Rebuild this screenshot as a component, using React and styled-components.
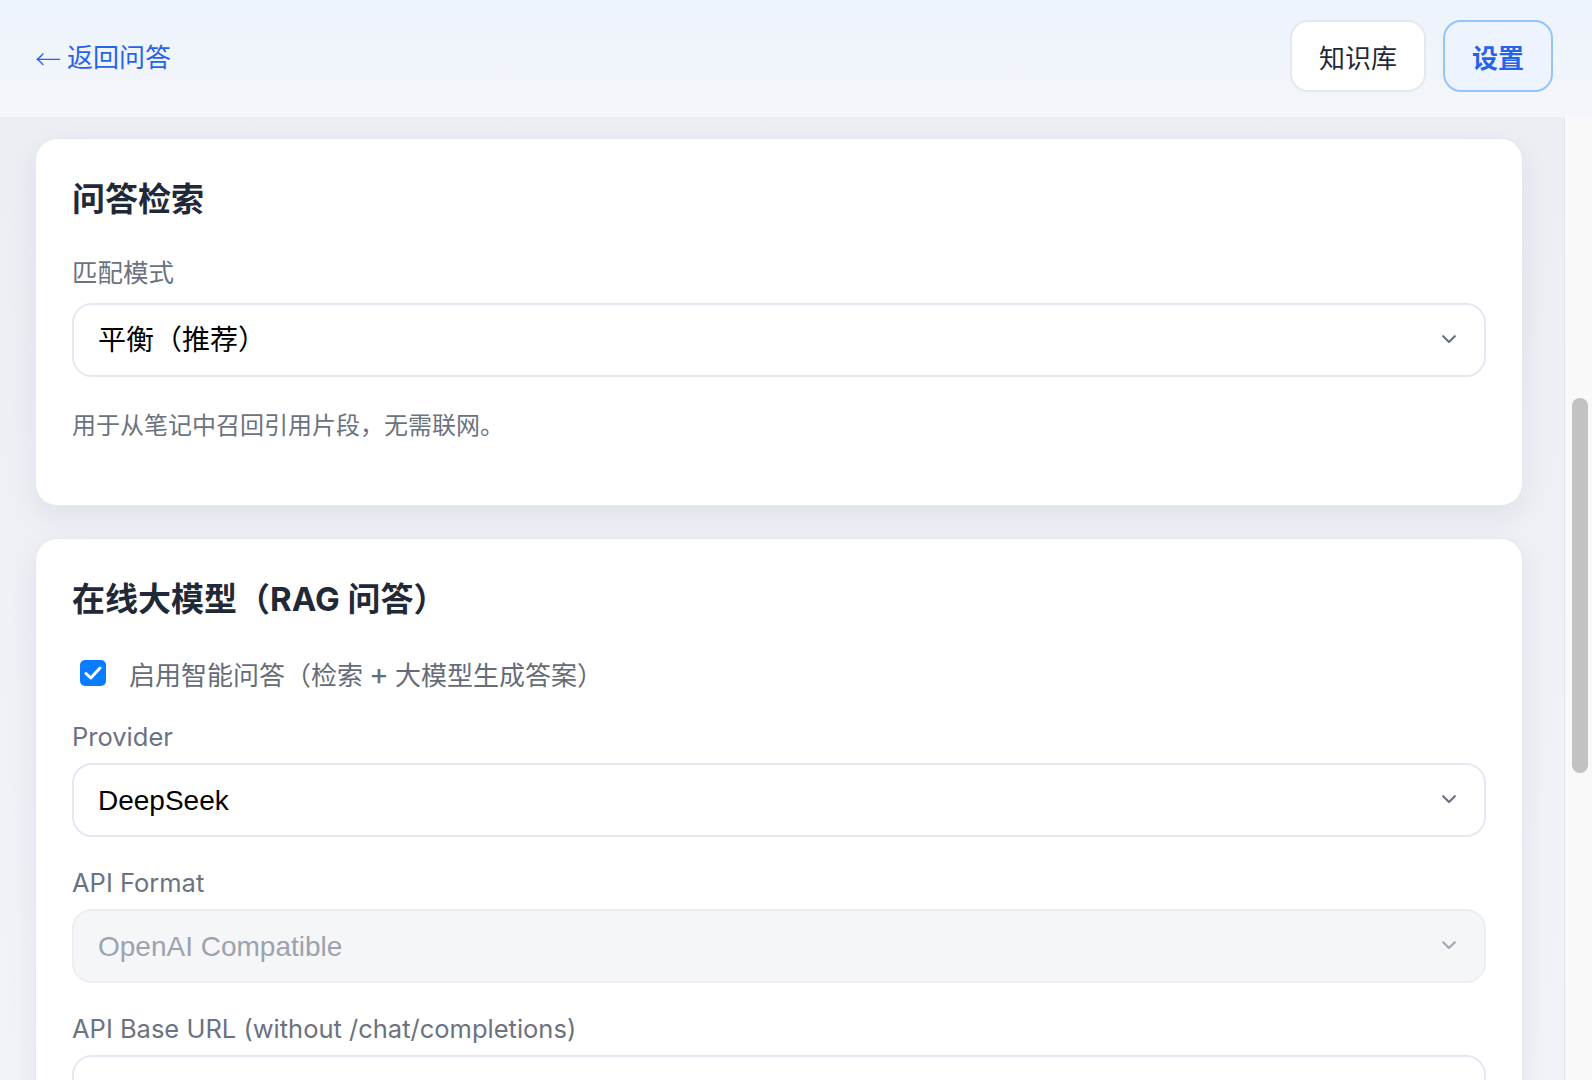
import React from 'react';
import styled, { createGlobalStyle } from 'styled-components';

const GlobalStyle = createGlobalStyle`
  html, body { margin: 0; padding: 0; height: 100%; overflow: hidden; }
  body {
    font-family: Inter, "Noto Sans CJK SC", sans-serif;
    background: #f0f2f7;
    -webkit-font-smoothing: antialiased;
  }
  #root { height: 100%; }
  *, *::before, *::after { box-sizing: border-box; }
`;

const Shell = styled.div`
  height: 100vh;
  display: flex;
  flex-direction: column;
  background: #f0f2f7;
`;

const TopBar = styled.header`
  flex: 0 0 117px;
  display: flex;
  align-items: center;
  justify-content: space-between;
  padding: 0 39px 5px 35px;
  background: linear-gradient(180deg, #edf3fd 0%, #f4f6fa 100%);
`;

const BackLink = styled.a`
  display: flex;
  align-items: center;
  gap: 6px;
  margin-top: 4px;
  font-size: 26px;
  line-height: 36px;
  color: #2563eb;
  text-decoration: none;
  cursor: pointer;
`;

const BackArrow = styled.span`
  font-family: "Noto Sans CJK SC", sans-serif;
  font-weight: 300;
`;

const NavGroup = styled.nav`
  display: flex;
  gap: 17px;
`;

const NavButton = styled.button`
  height: 72px;
  padding: 0 27px;
  border-radius: 18px;
  font-family: Inter, "Noto Sans CJK SC", sans-serif;
  font-size: 26px;
  font-weight: ${(p) => (p.$active ? 700 : 400)};
  color: ${(p) => (p.$active ? '#2563eb' : '#1f2937')};
  background: ${(p) => (p.$active ? '#eef4ff' : '#ffffff')};
  border: 2px solid ${(p) => (p.$active ? '#93c5fd' : '#e4e8f0')};
  cursor: pointer;
`;

const Body = styled.div`
  flex: 1;
  min-height: 0;
  display: flex;
`;

const Main = styled.main`
  flex: 1;
  min-width: 0;
  overflow: hidden;
  background: linear-gradient(180deg, #eceef4 0%, #f1f3f8 100%);
`;

const ScrollTrack = styled.div`
  flex: 0 0 28px;
  display: flex;
  flex-direction: column;
  background: #f9f9f9;
  border-left: 1px solid #e3e3e3;
  padding-left: 7px;
`;

const ScrollThumb = styled.div`
  width: 16px;
  border-radius: 8px;
  background: #c2c2c2;
`;

const Content = styled.div`
  display: flex;
  flex-direction: column;
  gap: 32px;
  padding: 21px 41px 40px 35px;
`;

const Card = styled.section`
  background: #ffffff;
  border: 1px solid #e5e8ef;
  border-radius: 22px;
  padding: 36px;
  box-shadow: 0 10px 30px rgba(31, 45, 90, 0.07);
`;

const CardTitle = styled.h2`
  margin: 0 0 32px;
  font-size: 33px;
  line-height: 48px;
  font-weight: 700;
  color: #1f2937;
`;

const Stack = styled.div`
  display: flex;
  flex-direction: column;
  gap: 28px;
`;

const Field = styled.div`
  display: flex;
  flex-direction: column;
  gap: ${(p) => p.$gap ?? 8}px;
`;

const Label = styled.label`
  font-size: 25.5px;
  line-height: 36px;
  color: #6b7280;
`;

const SelectWrap = styled.div`
  position: relative;
`;

const Select = styled.select`
  appearance: none;
  -webkit-appearance: none;
  width: 100%;
  height: 74px;
  padding: 0 64px 0 24px;
  border: 2px solid ${(p) => (p.disabled ? '#eceef3' : '#e3e8f1')};
  border-radius: 20px;
  background: ${(p) => (p.disabled ? '#f5f6f8' : '#ffffff')};
  color: ${(p) => (p.disabled ? '#9ca3af' : '#000000')};
  font-family: "Liberation Sans", "Noto Sans CJK SC", sans-serif;
  font-size: 28px;
  opacity: 1;
  outline: none;
`;

const TextInput = styled.input`
  width: 100%;
  height: 74px;
  padding: 0 24px;
  border: 2px solid #e3e8f1;
  border-radius: 20px;
  background: #ffffff;
  color: #000000;
  font-family: "Liberation Sans", "Noto Sans CJK SC", sans-serif;
  font-size: 28px;
  outline: none;
`;

const Chevron = styled.svg`
  position: absolute;
  right: 30px;
  top: 50%;
  margin-top: -5px;
  width: 14px;
  height: 9px;
  pointer-events: none;
  color: ${(p) => (p.$muted ? '#a3a9b4' : '#6b7280')};
`;

const Help = styled.p`
  margin: 31px 0 25px;
  font-size: 24px;
  line-height: 36px;
  color: #6b7280;
`;

const CheckRow = styled.label`
  display: flex;
  align-items: center;
  gap: 23px;
  height: 36px;
  padding-left: 8px;
  font-size: 26px;
  color: #656c78;
  cursor: pointer;
`;

const Plus = styled.span`
  font-size: 30px;
  line-height: 1;
  padding: 0 6px;
`;

const CheckBox = styled.span`
  flex: 0 0 26px;
  width: 26px;
  height: 26px;
  border-radius: 5px;
  background: #0a7cff;
  display: flex;
  align-items: center;
  justify-content: center;
`;

function ChevronDown({ muted }) {
  return (
    <Chevron $muted={muted} viewBox="0 0 14 9" fill="none">
      <polyline points="1.2,1.2 7,7 12.8,1.2" stroke="currentColor" strokeWidth="2.2" strokeLinecap="round" strokeLinejoin="round" />
    </Chevron>
  );
}

function SelectField({ label, value, options, disabled, gap }) {
  return (
    <Field $gap={gap}>
      <Label>{label}</Label>
      <SelectWrap>
        <Select value={value} disabled={disabled} onChange={() => {}}>
          {options.map((o) => (
            <option key={o} value={o}>{o}</option>
          ))}
        </Select>
        <ChevronDown muted={disabled} />
      </SelectWrap>
    </Field>
  );
}

function InputField({ label, value }) {
  return (
    <Field>
      <Label>{label}</Label>
      <TextInput type="text" value={value} readOnly />
    </Field>
  );
}

const thumb = { top: 281, height: 375 };

export default function App() {
  return (
    <>
      <GlobalStyle />
      <Shell>
        <TopBar>
          <BackLink>
            <BackArrow>←</BackArrow>
            返回问答
          </BackLink>
          <NavGroup>
            <NavButton>知识库</NavButton>
            <NavButton $active>设置</NavButton>
          </NavGroup>
        </TopBar>
        <Body>
          <Main>
            <Content>
              <Card>
                <CardTitle>问答检索</CardTitle>
                <SelectField gap={12} label="匹配模式" value="平衡（推荐）" options={['平衡（推荐）', '精确', '宽松']} />
                <Help>用于从笔记中召回引用片段，无需联网。</Help>
              </Card>

              <Card>
                <CardTitle>在线大模型（RAG 问答）</CardTitle>
                <Stack>
                  <CheckRow>
                    <CheckBox>
                      <svg width="18" height="14" viewBox="0 0 18 14" fill="none">
                        <polyline points="2,7.5 6.8,12 16,2" stroke="#ffffff" strokeWidth="3" strokeLinecap="round" strokeLinejoin="round" />
                      </svg>
                    </CheckBox>
                    <span>
                      启用智能问答（检索<Plus>+</Plus>大模型生成答案）
                    </span>
                  </CheckRow>
                  <SelectField label="Provider" value="DeepSeek" options={['DeepSeek', 'OpenAI', 'Moonshot']} />
                  <SelectField label="API Format" value="OpenAI Compatible" options={['OpenAI Compatible']} disabled />
                  <InputField label="API Base URL (without /chat/completions)" value="https://api.deepseek.com/v1" />
                </Stack>
              </Card>
            </Content>
          </Main>
          <ScrollTrack>
            <ScrollThumb style={{ marginTop: thumb.top, height: thumb.height }} />
          </ScrollTrack>
        </Body>
      </Shell>
    </>
  );
}
